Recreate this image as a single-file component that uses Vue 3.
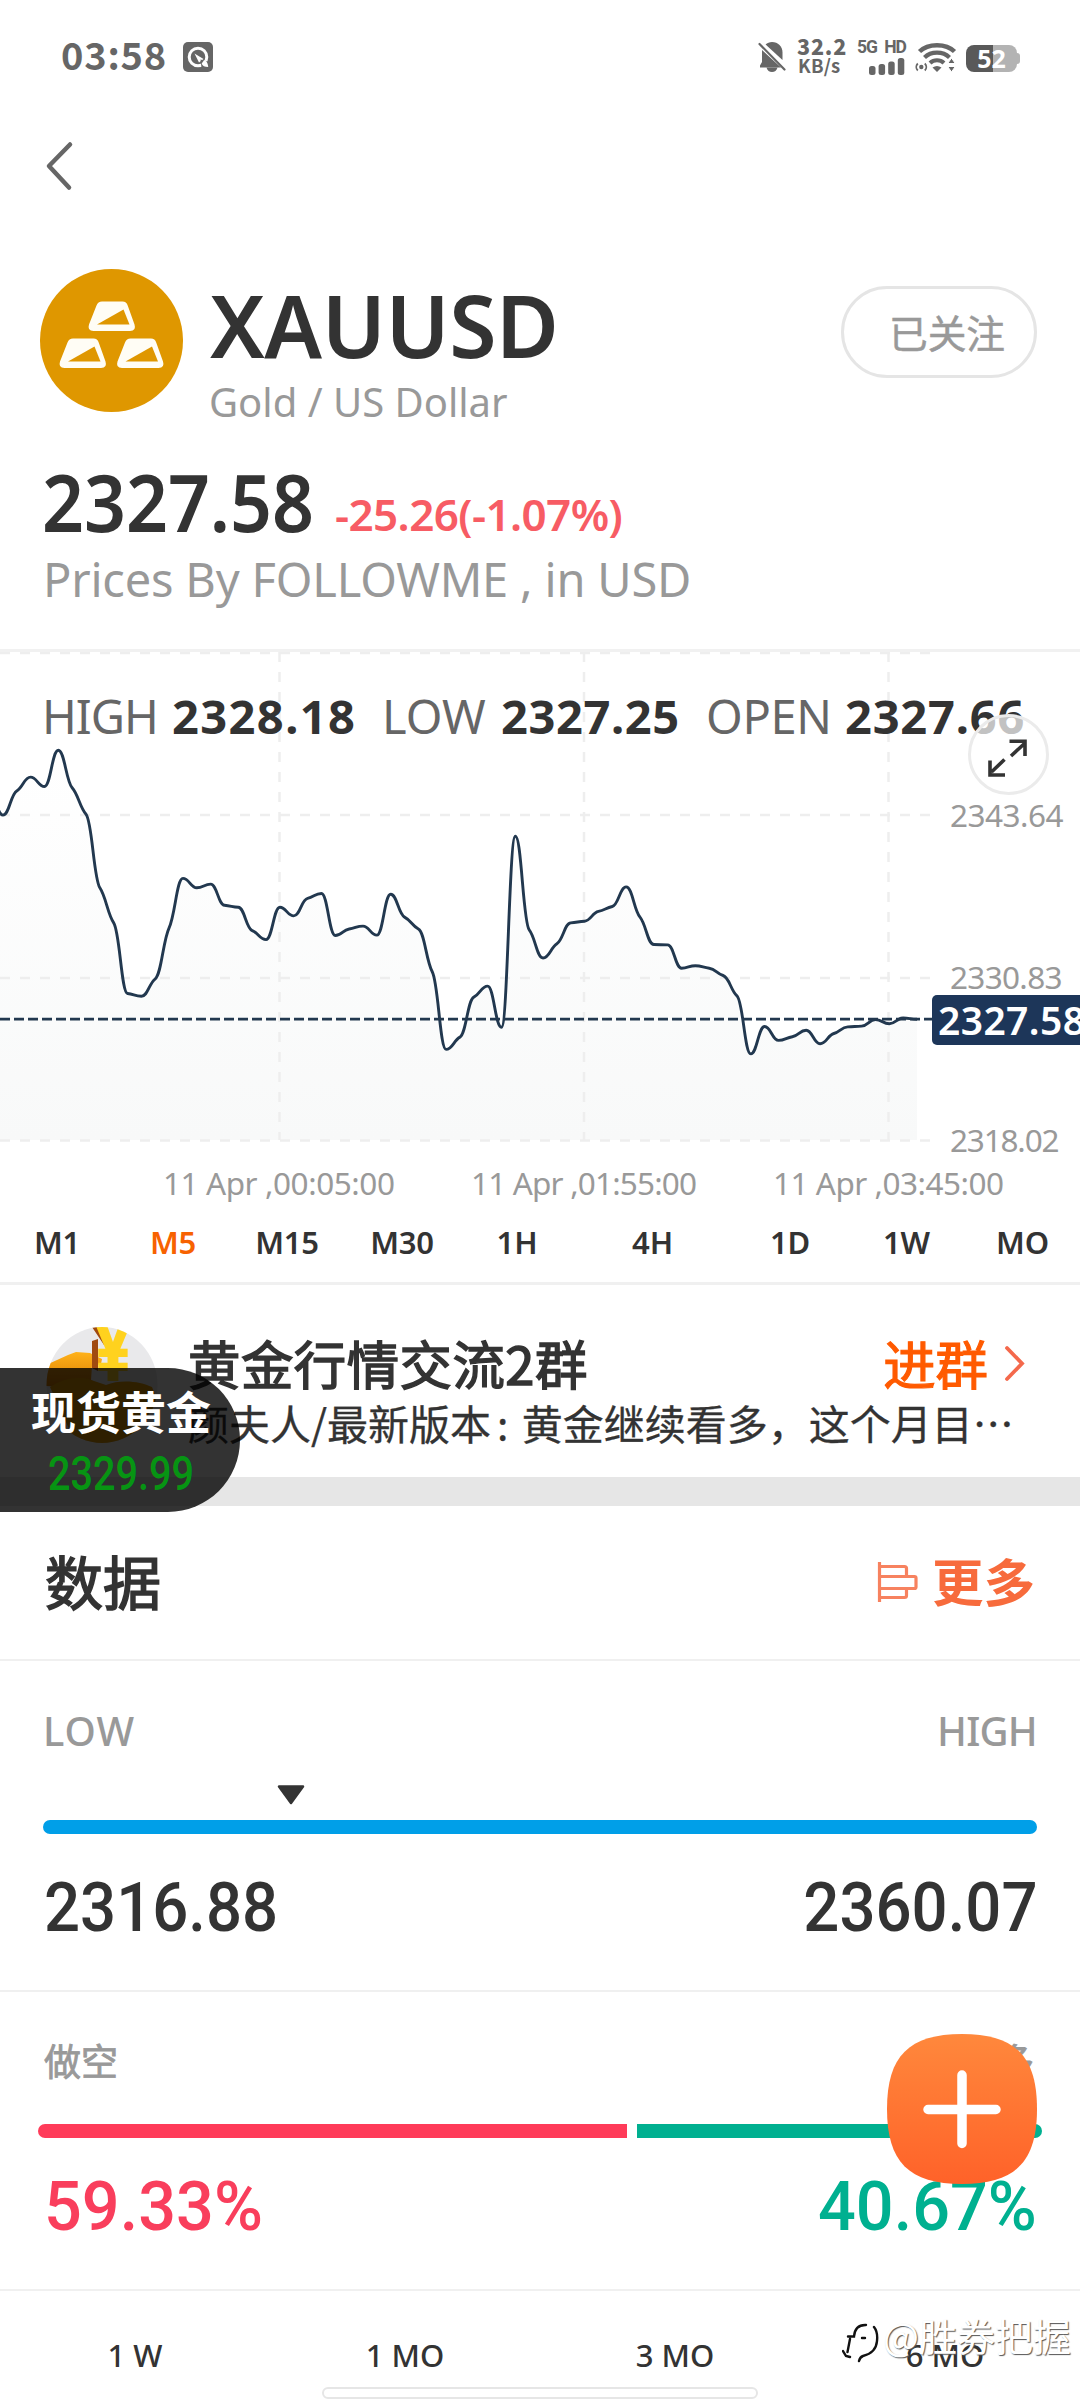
<script setup>
const step = 13.85
const startX = -10.95
const series = [
  139, 163.1, 139, 125.1, 134.5, 98.2, 135.8, 162.3, 235.8, 270.9, 341.5, 344.3, 326.8, 275.8, 226.4,
  235.8, 232.1, 253.3, 255.3, 278.6, 287.6, 255.3, 263.9, 246.4, 241.5, 283.5, 277, 274.1, 283.1, 242.3,
  265.1, 277, 319.8, 397.4, 385.1, 345.1, 334.1, 375.3, 184.3, 277.8, 306, 291.7, 270.9, 269.2, 259.4,
  254.5, 234.9, 265.1, 292.5, 292.9, 316.2, 313.7, 316.2, 323.5, 343.9, 401.9, 374.5, 388.4, 384.7,
  378.2, 391.7, 381.5, 374.9, 374.1, 367.6, 371.7, 366, 367.2
]

// Smooth curve that keeps every sample a local extremum or a soft shoulder.
function buildLine(ys) {
  const slopes = ys.map((y, i) => {
    if (i === 0 || i === ys.length - 1) return 0
    const a = (y - ys[i - 1]) / step
    const b = (ys[i + 1] - y) / step
    return a * b <= 0 ? 0 : Math.sign(a) * Math.min(Math.abs(a), Math.abs(b)) * 0.6
  })
  const k = step * 0.45
  let d = `M${startX} ${ys[0]}`
  for (let i = 1; i < ys.length; i++) {
    const x0 = startX + (i - 1) * step
    const x1 = startX + i * step
    d += `C${(x0 + k).toFixed(2)} ${(ys[i - 1] + slopes[i - 1] * k).toFixed(2)} ${(x1 - k).toFixed(2)} ${(ys[i] - slopes[i] * k).toFixed(2)} ${x1.toFixed(2)} ${ys[i]}`
  }
  return d
}

const line = buildLine(series)
const area = `${line}V488H${startX}Z`

const yLabels = [
  { y: 174.5, text: '2343.64', w: 113.5 },
  { y: 337, text: '2330.83', w: 112.5 },
  { y: 500, text: '2318.02', w: 109.5 }
]
const xLabels = [
  { x: 163, text: '11 Apr ,00:05:00', w: 232 },
  { x: 471, text: '11 Apr ,01:55:00', w: 226 },
  { x: 773, text: '11 Apr ,03:45:00', w: 231 }
]
const frames = ['M1', 'M5', 'M15', 'M30', '1H', '4H', '1D', '1W', 'MO']
const active = 'M5'
const periods = ['1 W', '1 MO', '3 MO', '6 MO']
</script>

<template>
  <div class="screen">
    <header class="status">
      <span class="clock">03:58</span>
      <svg class="appicon" width="30" height="30" viewBox="0 0 30 30">
        <rect width="30" height="30" rx="5" fill="#666" />
        <circle cx="15" cy="15" r="8.800" fill="none" stroke="#fff" stroke-width="3" />
        <path d="M11.500 11.500l9 5.500-4.500 3.500z" fill="#fff" />
        <path d="M17.500 17.500l7 2v6h-6z" fill="#666" />
        <path d="M21 18.200c2.200 0 3.800 2.500 4.200 6.800-3.500 0-6-1-6.500-3.500z" fill="#fff" />
      </svg>
      <div class="grow"></div>
      <svg class="bell" width="28" height="32" viewBox="0 0 28 32">
        <path d="M14 1c6 0 10.500 4.300 10.500 10.500V19L7.500 3.500C9.300 1.900 11.500 1 14 1z" fill="#666" />
        <path d="M4 9l19 17.500H2v-2l2-3.500z" fill="#666" />
        <path d="M8.500 26.500h11c-.8 3-2.800 4.500-5.500 4.500s-4.700-1.500-5.500-4.500z" fill="#666" />
        <path d="M3 .5l24.500 26" stroke="#fff" stroke-width="2" />
        <path d="M1.500 3l25 25.500" stroke="#666" stroke-width="2.200" stroke-linecap="round" />
      </svg>
      <div class="speed"><b>32.2</b><i>KB/s</i></div>
      <div class="cell">
        <span>5G HD</span>
        <svg width="36" height="17" viewBox="0 0 36 17" fill="#666">
          <rect x="0" y="8" width="6.500" height="9" rx="2.500" />
          <rect x="9.600" y="6" width="6.500" height="11" rx="2.500" />
          <rect x="19.200" y="3.500" width="6.500" height="13.500" rx="2.500" />
          <rect x="28.800" y="0" width="6.500" height="17" rx="2.500" />
        </svg>
      </div>
      <svg class="wifi" width="42" height="32" viewBox="0 0 42 32" fill="none" stroke="#666">
        <path d="M4.500 10.500C13 2 31 2 39.500 10.500" stroke-width="4.500" />
        <path d="M9.500 16.500C16 10 28 10 34.500 16.500" stroke-width="4.200" />
        <path d="M15 22C19 18.300 25 18.300 29 22" stroke-width="4.200" />
        <path d="M17.500 26.500c3-2 6-2 9 0L22 31z" fill="#666" stroke="none" />
        <circle cx="6.300" cy="26" r="2.200" fill="#666" stroke="none" />
        <path d="M2.800 22.500c-2 2-2 5 0 7M9.800 22.500c2 2 2 5 0 7" stroke-width="1.800" />
        <path d="M36.500 17l3.800 5.500h-7.600zM36.500 31l3.800-5.500h-7.600z" fill="#666" stroke="#fff" stroke-width="1" />
      </svg>
      <div class="battery"><span>52</span></div>
    </header>

    <nav class="nav">
      <svg width="30" height="52" viewBox="0 0 30 52"><path d="M25 4.500L4 26l20 21.500" fill="none" stroke="#666" stroke-width="4.500" stroke-linecap="round" stroke-linejoin="round" /></svg>
    </nav>

    <section class="symbol">
      <svg class="coin" width="143" height="143" viewBox="0 0 143 143">
        <circle cx="71.500" cy="71.500" r="71.500" fill="#df9700" />
        <g v-for="p in [[48.500, 32], [19.500, 69], [77, 69]]" :key="p[0]" :transform="`translate(${p[0]} ${p[1]})`">
          <path d="M13.500 0.500H34q4 0 5.200 4L46 23.500q2 6.500-4.500 6.500H5q-6.500 0-4.500-6.500L8 4.500q1.500-4 5.500-4z" fill="#fffdf5" />
          <path d="M8.500 23.500L35 8.500l6 15z" fill="#df9700" />
        </g>
      </svg>
      <div class="names">
        <h1>XAUUSD</h1>
        <p>Gold / US Dollar</p>
      </div>
      <button class="follow">已关注</button>
    </section>

    <section class="quote">
      <div class="priceline">
        <strong>2327.58</strong>
        <span>-25.26(-1.07%)</span>
      </div>
      <p>Prices By FOLLOWME , in USD</p>
    </section>

    <section class="chart">
      <svg width="1080" height="556" viewBox="0 0 1080 556">
        <defs>
          <linearGradient id="fade" x1="0" y1="98" x2="0" y2="488" gradientUnits="userSpaceOnUse">
            <stop offset="0" stop-color="#f8f9f9" stop-opacity="0" />
            <stop offset="1" stop-color="#f8f9f9" />
          </linearGradient>
        </defs>
        <path :d="area" fill="url(#fade)" />
        <g stroke="#eeeeee" stroke-width="2.500" stroke-dasharray="10 10">
          <path v-for="y in [1, 163, 326, 488.500]" :key="y" :d="`M0 ${y}H932`" />
          <path v-for="x in [279.500, 584, 888.500]" :key="x" :d="`M${x} 0V488`" />
        </g>
        <path d="M0 367.200H932" stroke="#22384f" stroke-width="2.800" stroke-dasharray="10 4" />
        <path :d="line" fill="none" stroke="#22384f" stroke-width="2.900" />
        <g class="axis">
          <text v-for="l in yLabels" :key="l.text" x="950" :y="l.y" :textLength="l.w">{{ l.text }}</text>
          <text v-for="l in xLabels" :key="l.text" :x="l.x" y="543" :textLength="l.w">{{ l.text }}</text>
        </g>
        <rect x="932" y="343" width="160" height="50" rx="5" fill="#1d3659" />
        <text class="tag" x="938" y="383" textLength="147">2327.58</text>
      </svg>
      <div class="ohlc">
        <span class="k">HIGH</span><b>2328.18</b>
        <span class="k k2">LOW</span><b class="b2">2327.25</b>
        <span class="k k3">OPEN</span><b class="b3">2327.66</b>
      </div>
      <div class="expand">
        <svg width="80" height="80" viewBox="0 0 80 80" fill="none" stroke="#333" stroke-width="3.600">
          <path d="M43 42l13.500-12.500M41.500 27.300h15.500v14.700M36.500 45.500L23.500 58M22 46.500v14.500h15" />
        </svg>
      </div>
    </section>

    <div class="tabs">
      <span v-for="f in frames" :key="f" :class="{ on: f === active }">{{ f }}</span>
    </div>

    <section class="group">
      <svg class="avatar" width="112" height="116" viewBox="0 0 112 116">
        <defs>
          <clipPath id="round"><ellipse cx="56" cy="58" rx="55.500" ry="58" /></clipPath>
          <linearGradient id="gold" x1="0" y1="0" x2="0" y2="1"><stop offset="0" stop-color="#ffb21a" /><stop offset="1" stop-color="#d97a00" /></linearGradient>
        </defs>
        <g clip-path="url(#round)">
          <rect width="112" height="116" fill="#e9e9eb" />
          <path d="M0 38l22-10 8-3 14 1 12 6-1 5-9 2-1 14-6 8-39-2z" fill="url(#gold)" />
          <path d="M4 60c14-10 34-12 44-6l12 4c14-6 34-4 46 2l6 15-32 42H30z" fill="#e39a00" />
          <path d="M46 14l6-2v32l-6-3zM46 0l4-1 12 17-4 2z" fill="#a04a10" />
          <text class="yen" transform="translate(45 54) scale(.82 1)">¥</text>
        </g>
      </svg>
      <div class="info">
        <div class="top">
          <h2>黄金行情交流2群</h2>
          <a>进群</a>
          <svg width="24" height="40" viewBox="0 0 24 40"><path d="M4 5l15 15.500L4 36" fill="none" stroke="#f4694c" stroke-width="3.800" stroke-linecap="round" /></svg>
        </div>
        <p>颜夫人/最新版本<em>:</em> 黄金继续看多，这个月目…</p>
      </div>
      <div class="float">
        <b>现货黄金</b>
        <span>2329.99</span>
      </div>
    </section>
    <div class="band"></div>

    <section class="datahead">
      <h3>数据</h3>
      <div class="more">
        <svg width="42" height="40" viewBox="0 0 42 40" fill="none" stroke="#f7825f" stroke-width="3.200">
          <path d="M2.500 0v40M3 4.500h24.500q2 0 2 2v7M3 14.500h34.500q1.500 0 1.500 1.500v9q0 1.500-1.500 1.500H3M29.500 27v6.500q0 2-2 2H3" />
        </svg>
        <span>更多</span>
      </div>
    </section>

    <section class="range">
      <div class="pair label"><span class="lo">LOW</span><span class="hi">HIGH</span></div>
      <svg class="marker" width="28" height="20" viewBox="0 0 28 20"><path d="M2 1.500h24L14 18z" fill="#333" stroke="#333" stroke-width="2.500" stroke-linejoin="round" /></svg>
      <div class="bar"></div>
      <div class="pair num"><span>2316.88</span><span>2360.07</span></div>
    </section>

    <section class="sentiment">
      <div class="pair zh"><span>做空</span><span>做多</span></div>
      <div class="split"><i class="short"></i><i class="long"></i></div>
      <div class="pair num pct"><span class="red">59.33%</span><span class="green">40.67%</span></div>
      <div class="fab">
        <svg width="150" height="150" viewBox="0 0 150 150">
          <defs><linearGradient id="fab" x1="0" y1="0" x2="0" y2="1"><stop offset="0" stop-color="#ff883c" /><stop offset="1" stop-color="#ff6229" /></linearGradient></defs>
          <path d="M75 0C128 0 150 22 150 75S128 150 75 150 0 128 0 75 22 0 75 0z" fill="url(#fab)" />
          <path d="M41 75.500h68M75 41v68.500" stroke="#fff" stroke-width="9.500" stroke-linecap="round" />
        </svg>
      </div>
    </section>

    <section class="periods">
      <span v-for="p in periods" :key="p">{{ p }}</span>
      <div class="home"></div>
      <div class="mark">
        <svg width="40" height="42" viewBox="0 0 40 42" fill="none" stroke-linecap="round">
          <path d="M7 17h6q2-9 11-9M9 20L7 32l-5 1M33 9q7 13-7 26-8 0-9 6" stroke="#fff" stroke-width="5" />
          <path d="M6 15.500h6q1-12 12-11.500M20 17h3M8 18L5.500 31M1 30l3 5 4 1M32 6q4 5 3 14-1 12-14 15-3 1-4 5" stroke="#111" stroke-width="2.400" />
        </svg>
        <span>@胜券把握</span>
      </div>
    </section>
  </div>
</template>

<style>
body { margin: 0; background: #fff; }
</style>

<style scoped>
.screen {
  width: 1080px; height: 2400px; overflow: hidden; background: #fff; color: #333;
  font-family: "Noto Sans", "Noto Sans CJK SC", sans-serif;
  box-sizing: border-box;
}
.screen * { box-sizing: border-box; }
h1, h2, h3, p { margin: 0; }
i, em { font-style: normal; }
svg { display: block; flex: none; }

.status { display: flex; align-items: center; height: 114px; padding: 0 60px 0 61px; color: #666; }
.clock { font: 700 38px/40px "Noto Sans CJK SC", sans-serif; letter-spacing: .8px; margin-top: -6px; }
.appicon { margin-left: 16px; }
.grow { flex: 1; }
.bell { margin-right: 11px; }
.speed { display: flex; flex-direction: column; width: 50px; font-family: "Noto Sans CJK SC", sans-serif; font-weight: 700; margin: -2px 9px 0 0; }
.speed b { font-size: 21.500px; line-height: 18px; letter-spacing: .8px; }
.speed i { font-size: 18.500px; line-height: 20px; padding-left: 1px; letter-spacing: .2px; }
.cell { display: flex; flex-direction: column; align-items: flex-end; gap: 3px; width: 49px; font: 700 17.500px/16px Roboto, sans-serif; white-space: nowrap; margin-right: 10px; }
.cell span { letter-spacing: -1px; word-spacing: 4px; margin-right: -1px; }
.wifi { margin-right: 9px; }
.battery { position: relative; width: 51px; height: 27px; border-radius: 8px; background: linear-gradient(90deg, #595959 27px, #b3b3b3 27px); font: 700 25px/27px "Noto Sans", sans-serif; color: #fff; text-align: center; margin: 3px 3px 0 0; }
.battery::after { content: ""; position: absolute; right: -3px; top: 8px; width: 3px; height: 11px; background: #b3b3b3; border-radius: 0 3px 3px 0; }

.nav { height: 103px; display: flex; align-items: center; padding-left: 45px; }

.symbol { display: flex; height: 244px; padding: 52px 43px 0 40px; }
.names { padding: 11px 0 0 26px; flex: 1; }
.names h1 { font-size: 86px; line-height: 90px; font-weight: 600; letter-spacing: -.5px; margin-left: 1px; }
.names p { font-size: 40px; line-height: 50px; margin-top: 7px; color: #999; }
.follow { width: 196px; height: 92px; margin-top: 17px; border: 3px solid #e5e5e5; border-radius: 46px; background: #fff; padding: 0 0 2px 45px; text-align: left; color: #999; font: 400 38.700px/40px "Noto Sans CJK SC", sans-serif; -webkit-text-stroke: .5px #999; }

.quote { height: 188px; padding-left: 42px; }
.priceline { display: flex; align-items: baseline; height: 90px; }
.priceline strong { font-size: 80px; line-height: 80px; font-weight: 600; transform: scaleX(.917); transform-origin: 0 50%; width: 293px; }
.priceline span { position: relative; top: -1px; font-size: 44px; line-height: 60px; font-weight: 600; letter-spacing: -.6px; color: #f75c64; }
.quote p { font-size: 47px; line-height: 56px; letter-spacing: -.2px; color: #999; margin-left: 1px; }

.chart { position: relative; height: 563px; border-top: 3px solid #f1f1f1; }
.axis { font-size: 31.500px; fill: #999; }
.tag { font-size: 39px; font-weight: 600; fill: #fff; }
.ohlc { position: absolute; left: 42px; top: 39px; display: flex; font-size: 47px; line-height: 50px; white-space: nowrap; }
.ohlc .k { color: #666; width: 130px; letter-spacing: -1px; }
.ohlc b { width: 210px; letter-spacing: 1.400px; font-weight: 700; }
.ohlc .k2 { width: 119px; letter-spacing: 0; }
.ohlc .b2 { width: 205px; letter-spacing: .6px; }
.ohlc .k3 { width: 139px; letter-spacing: -.3px; }
.ohlc .b3 { letter-spacing: .8px; width: auto; }
.expand { position: absolute; left: 968px; top: 62px; width: 81px; height: 81px; border: 3px solid #ebebeb; border-radius: 50%; background: rgba(255, 255, 255, .7); }
.expand svg { margin: -3px; }

.tabs { display: grid; grid-template-columns: 114px 118px 110px 120px 110px 161px 114px 119px 113px; height: 73px; border-bottom: 3px solid #f0f0f0; font-size: 31px; line-height: 60px; font-weight: 570; text-align: center; letter-spacing: -.2px; }
.tabs .on { color: #f76200; }

.group { position: relative; display: flex; height: 192px; padding: 42px 45px 0 46px; }
.yen { font: 700 94px "Noto Sans", sans-serif; fill: #ffd21e; }
.info { flex: 1; padding: 5px 0 0 30px; }
.top { display: flex; align-items: center; height: 60px; font: 400 52.400px/60px "Noto Sans CJK SC", sans-serif; }
.top h2 { font: inherit; flex: 1; letter-spacing: .5px; -webkit-text-stroke: 1.500px #333; }
.top a { color: #ff5a00; margin-right: 15px; -webkit-text-stroke: 1.200px #ff5a00; }
.top svg { margin: 2px 8px 0 0; }
.info p { font: 400 41px/50px "Noto Sans CJK SC", sans-serif; margin: 5px 0 0; white-space: nowrap; -webkit-text-stroke: .3px #333; }
.info em { margin: 0 4px 0 6px; }
.float { position: absolute; left: 0; top: 83px; width: 240px; height: 144px; border-radius: 0 72px 72px 0; background: rgba(0, 0, 0, .8); z-index: 2; }
.float b { display: block; padding: 15px 0 0 31px; color: #fff; font: 700 45px/56px "Noto Sans CJK SC", sans-serif; white-space: nowrap; }
.float span { display: block; margin: 5px 0 0 48px; color: #079413; font: 500 48px/60px Roboto, sans-serif; transform: scaleX(.825); transform-origin: 0 50%; width: 180px; }

.band { height: 29px; background: #e6e6e6; }

.datahead { display: flex; justify-content: space-between; align-items: center; height: 155px; padding: 0 45px 6px 45px; border-bottom: 2px solid #f0f0f0; font-family: "Noto Sans CJK SC", sans-serif; }
.datahead h3 { font-size: 58px; line-height: 70px; font-weight: 400; -webkit-text-stroke: 1.600px #333; }
.more { display: flex; align-items: center; color: #f76b3c; font-size: 51.500px; line-height: 60px; font-weight: 700; gap: 12px; }
.more svg { margin: 5px 1px 0 -1px; }

.pair { display: flex; justify-content: space-between; }
.range { height: 331px; padding: 45px 43px 0; border-bottom: 2px solid #f0f0f0; }
.label { font-size: 40px; line-height: 50px; font-weight: 500; color: #999; }
.lo { letter-spacing: 1px; }
.hi { letter-spacing: -.8px; }
.marker { margin: 29px 0 0 234px; }
.bar { margin-top: 15px; height: 14px; border-radius: 7px; background: #009fe8; }
.num { margin: 34px 0 0; font: 500 69px/80px Roboto, sans-serif; }
.num span { transform: scaleX(.92); transform-origin: 0 50%; margin-left: 1px; }
.num span:last-child { transform-origin: 100% 50%; }

.sentiment { position: relative; height: 299px; padding: 43px 38px 0; border-bottom: 2px solid #f0f0f0; }
.zh { padding: 0 8px 0 6px; color: #999; font: 400 37px/50px "Noto Sans CJK SC", sans-serif; -webkit-text-stroke: .8px #999; }
.split { display: flex; gap: 10px; margin-top: 39px; height: 14px; }
.short { width: 589px; background: #ff3b59; border-radius: 7px 0 0 7px; }
.long { flex: 1; background: #00b090; border-radius: 0 7px 7px 0; }
.pct { margin: 29px 5px 0; }
.pct span { transform: scaleX(.965); }
.red { color: #f93e5c; }
.green { color: #00b090; }
.fab { position: absolute; left: 887px; top: 42px; }

.periods { position: relative; display: grid; grid-template-columns: repeat(4, 270px); padding-top: 39px; height: 109px; font-size: 31px; line-height: 50px; font-weight: 500; text-align: center; }
.home { position: absolute; left: 322px; top: 96px; width: 436px; height: 12px; border: 2px solid #e6e6e6; border-radius: 6px; background: #fff; }
.mark { position: absolute; left: 842px; top: 16px; display: flex; align-items: center; color: #fff; font: 400 38px/50px "Noto Sans CJK SC", sans-serif; white-space: nowrap; text-shadow: 1px 1px 1px #555; }
.mark svg { margin: 14px 1px 0 0; }
</style>
